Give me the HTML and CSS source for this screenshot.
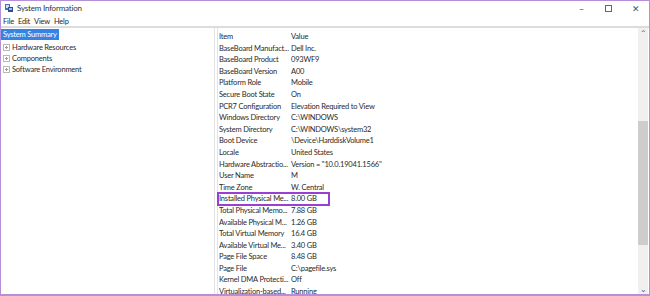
FILE: index.html
```html
<!DOCTYPE html>
<html lang="en">
<head>
    <meta charset="UTF-8">
    <title>System Information</title>
    <link rel="stylesheet" href="styles.css">
</head>
<body>
    <div class="window">
        <!-- title bar -->
        <div class="titlebar">
            <svg class="app-icon" width="10" height="10" viewBox="0 0 10 10">
                <rect x="1" y="1" width="5" height="6" fill="#4a6fb5"/>
                <rect x="2" y="2" width="3" height="3" fill="#cfe3f7"/>
                <rect x="4" y="4" width="5" height="5" fill="#2b4f8f"/>
                <rect x="5" y="5" width="3" height="2" fill="#9cc3ea"/>
            </svg>
            <span class="title">System Information</span>
            <div class="controls">
                <span class="ctl">&#8211;</span>
                <span class="ctl"><span class="max-box"></span></span>
                <span class="ctl">&#10005;</span>
            </div>
        </div>
        <!-- menu -->
        <div class="menubar">
            <span>File</span>
            <span>Edit</span>
            <span>View</span>
            <span>Help</span>
        </div>
        <div class="main">
            <div class="tree">
                <div class="node selected">System Summary</div>
                <div class="node child"><span class="plus"></span>Hardware Resources</div>
                <div class="node child"><span class="plus"></span>Components</div>
                <div class="node child"><span class="plus"></span>Software Environment</div>
            </div>
            <div class="list">
                <div class="rows">
                    <div class="row head"><span class="item">Item</span><span class="value">Value</span></div>
                    <div class="row"><span class="item">BaseBoard Manufact...</span><span class="value">Dell Inc.</span></div>
                    <div class="row"><span class="item">BaseBoard Product</span><span class="value">093WF9</span></div>
                    <div class="row"><span class="item">BaseBoard Version</span><span class="value">A00</span></div>
                    <div class="row"><span class="item">Platform Role</span><span class="value">Mobile</span></div>
                    <div class="row"><span class="item">Secure Boot State</span><span class="value">On</span></div>
                    <div class="row"><span class="item">PCR7 Configuration</span><span class="value">Elevation Required to View</span></div>
                    <div class="row"><span class="item">Windows Directory</span><span class="value">C:\WINDOWS</span></div>
                    <div class="row"><span class="item">System Directory</span><span class="value">C:\WINDOWS\system32</span></div>
                    <div class="row"><span class="item">Boot Device</span><span class="value">\Device\HarddiskVolume1</span></div>
                    <div class="row"><span class="item">Locale</span><span class="value">United States</span></div>
                    <div class="row"><span class="item">Hardware Abstractio...</span><span class="value">Version = "10.0.19041.1566"</span></div>
                    <div class="row"><span class="item">User Name</span><span class="value">M</span></div>
                    <div class="row"><span class="item">Time Zone</span><span class="value">W. Central</span></div>
                    <div class="row marked"><span class="item">Installed Physical Me...</span><span class="value">8.00 GB</span></div>
                    <div class="row"><span class="item">Total Physical Memo...</span><span class="value">7.88 GB</span></div>
                    <div class="row"><span class="item">Available Physical M...</span><span class="value">1.26 GB</span></div>
                    <div class="row"><span class="item">Total Virtual Memory</span><span class="value">16.4 GB</span></div>
                    <div class="row"><span class="item">Available Virtual Me...</span><span class="value">3.40 GB</span></div>
                    <div class="row"><span class="item">Page File Space</span><span class="value">8.48 GB</span></div>
                    <div class="row"><span class="item">Page File</span><span class="value">C:\pagefile.sys</span></div>
                    <div class="row"><span class="item">Kernel DMA Protecti...</span><span class="value">Off</span></div>
                    <div class="row"><span class="item">Virtualization-based...</span><span class="value">Running</span></div>
                </div>
                <div class="scrollbar">
                    <span class="arrow">&#8963;</span>
                    <div class="track"><div class="thumb"></div></div>
                    <span class="arrow">&#8964;</span>
                </div>
            </div>
        </div>
    </div>
</body>
</html>
```

FILE: styles.css
```css
* {
    box-sizing: border-box;
}
body {
    margin: 0;
    font-family: Lato, "Noto Sans", sans-serif;
    font-size: 7.5px;
    letter-spacing: -0.2px;
    color: #2a2a2a;
    background: #fff;
}
.window {
    width: 650px;
    height: 296px;
    border: 1px solid #b68fd6;
    border-bottom-width: 2px;
    display: flex;
    flex-direction: column;
    overflow: hidden;
}
.titlebar {
    height: 15px;
    display: flex;
    align-items: center;
    padding-left: 3px;
    padding-bottom: 1px;
}
.app-icon {
    margin-right: 3px;
}
.title {
    font-size: 8px;
    color: #333;
}
.controls {
    margin-left: auto;
    display: flex;
    color: #555;
}
.ctl {
    width: 27px;
    text-align: center;
    font-size: 9px;
    display: flex;
    justify-content: center;
    align-items: center;
}
.max-box {
    width: 7px;
    height: 7px;
    border: 1px solid #666;
}
.menubar {
    height: 12px;
    display: flex;
    align-items: center;
    gap: 4px;
    padding-left: 2px;
    border-bottom: 2px solid #dcdcdc;
}
.main {
    flex: 1;
    display: flex;
    min-height: 0;
}
.tree {
    width: 214px;
    border-right: 1px solid #e3e3e3;
    padding-top: 1px;
}
.node {
    height: 11px;
    line-height: 11px;
    white-space: nowrap;
}
.node.selected {
    display: inline-block;
    background: #3584e4;
    color: #fff;
    padding: 0 2px;
    margin-bottom: 2px;
}
.node.child {
    display: flex;
    align-items: center;
    padding-left: 2px;
}
.plus {
    width: 7px;
    height: 7px;
    border: 1px solid #b8b8b8;
    margin-right: 2px;
    position: relative;
}
.plus::before,
.plus::after {
    content: "";
    position: absolute;
    background: #9a9a9a;
}
.plus::before {
    left: 1px;
    right: 1px;
    top: 2px;
    height: 1px;
}
.plus::after {
    top: 1px;
    bottom: 1px;
    left: 2px;
    width: 1px;
}
.list {
    flex: 1;
    display: flex;
    margin-left: 2px;
    border-left: 1px solid #e3e3e3;
}
.rows {
    flex: 1;
    padding-top: 3px;
}
.row {
    height: 11.6px;
    line-height: 11.6px;
    display: flex;
    white-space: nowrap;
    padding-left: 1px;
}
.item {
    width: 72px;
    overflow: hidden;
}
.row.marked {
    width: 111px;
    outline: 2px solid #9a3fd3;
    outline-offset: -1px;
}
.scrollbar {
    width: 10px;
    background: #f0f0f0;
    display: flex;
    flex-direction: column;
    align-items: center;
    margin-right: 1px;
}
.arrow {
    height: 10px;
    font-size: 8px;
    line-height: 10px;
    color: #606060;
}
.track {
    flex: 1;
    width: 100%;
}
.thumb {
    margin-top: 83px;
    height: 124px;
    background: #cdcdcd;
}
```
